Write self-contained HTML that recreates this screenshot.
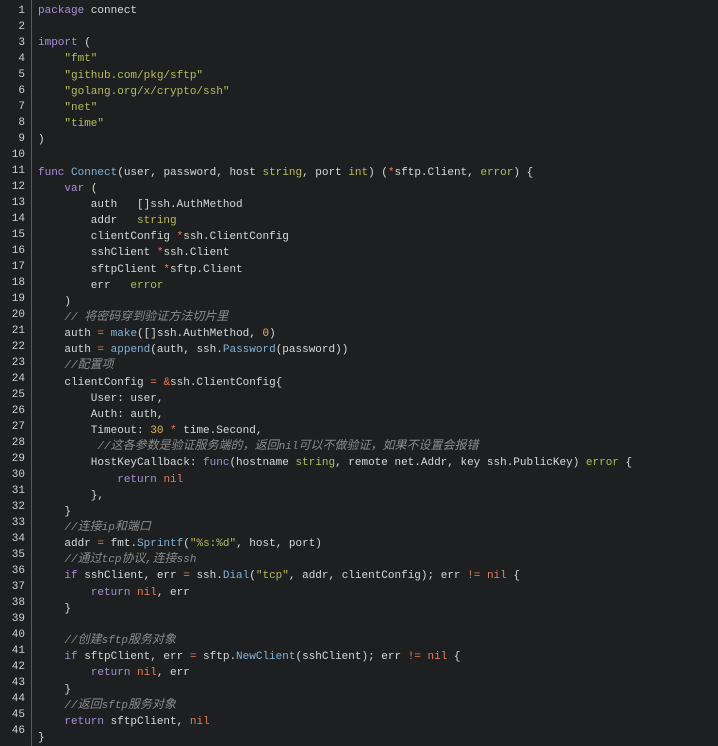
<!DOCTYPE html><html><head><meta charset="utf-8"><style>
body{margin:0;background:#1e1f20;width:718px;height:746px;overflow:hidden}
.w{position:relative;font-family:"Liberation Mono","Noto Sans CJK SC",monospace;font-size:11px;color:#d8d8d8}
.n{position:absolute;left:0;top:3px;width:25px;text-align:right;color:#d0d0d0;line-height:16px;white-space:pre}
.bar{position:absolute;left:31px;top:0;width:1px;height:746px;background:#5a5a5a}
.c{position:absolute;left:38px;top:3px;line-height:16.16px;white-space:pre}
.k{color:#a890d8}.s{color:#b5bd5c}.t{color:#b5bd5c}.f{color:#7fb4d9}.o{color:#e0805a}.m{color:#e8b85a}
.cm{color:#8c8c8c;font-style:italic}
.z{font-size:12px;line-height:10px}
</style></head><body><div class="w"><div class="bar"></div>
<div class="n">1
2
3
4
5
6
7
8
9
10
11
12
13
14
15
16
17
18
19
20
21
22
23
24
25
26
27
28
29
30
31
32
33
34
35
36
37
38
39
40
41
42
43
44
45
46</div>
<div class="c"><span class="k">package</span> connect

<span class="k">import</span> (
    <span class="s">"fmt"</span>
    <span class="s">"github.com/pkg/sftp"</span>
    <span class="s">"golang.org/x/crypto/ssh"</span>
    <span class="s">"net"</span>
    <span class="s">"time"</span>
)

<span class="k">func</span> <span class="f">Connect</span>(user, password, host <span class="t">string</span>, port <span class="t">int</span>) (<span class="o">*</span>sftp.Client, <span class="t">error</span>) {
    <span class="k">var</span> (
        auth   []ssh.AuthMethod
        addr   <span class="t">string</span>
        clientConfig <span class="o">*</span>ssh.ClientConfig
        sshClient <span class="o">*</span>ssh.Client
        sftpClient <span class="o">*</span>sftp.Client
        err   <span class="t">error</span>
    )
    <span class="cm">// <span class="z">将密码穿到验证方法切片里</span></span>
    auth <span class="o">=</span> <span class="f">make</span>([]ssh.AuthMethod, <span class="m">0</span>)
    auth <span class="o">=</span> <span class="f">append</span>(auth, ssh.<span class="f">Password</span>(password))
    <span class="cm">//<span class="z">配置项</span></span>
    clientConfig <span class="o">=</span> <span class="o">&amp;</span>ssh.ClientConfig{
        User: user,
        Auth: auth,
        Timeout: <span class="m">30</span> <span class="o">*</span> time.Second,
         <span class="cm">//<span class="z">这各参数是验证服务端的，返回</span>nil<span class="z">可以不做验证，如果不设置会报错</span></span>
        HostKeyCallback: <span class="k">func</span>(hostname <span class="t">string</span>, remote net.Addr, key ssh.PublicKey) <span class="t">error</span> {
            <span class="k">return</span> <span class="o">nil</span>
        },
    }
    <span class="cm">//<span class="z">连接</span>ip<span class="z">和端口</span></span>
    addr <span class="o">=</span> fmt.<span class="f">Sprintf</span>(<span class="s">"%s:%d"</span>, host, port)
    <span class="cm">//<span class="z">通过</span>tcp<span class="z">协议,连接</span>ssh</span>
    <span class="k">if</span> sshClient, err <span class="o">=</span> ssh.<span class="f">Dial</span>(<span class="s">"tcp"</span>, addr, clientConfig); err <span class="o">!=</span> <span class="o">nil</span> {
        <span class="k">return</span> <span class="o">nil</span>, err
    }

    <span class="cm">//<span class="z">创建</span>sftp<span class="z">服务对象</span></span>
    <span class="k">if</span> sftpClient, err <span class="o">=</span> sftp.<span class="f">NewClient</span>(sshClient); err <span class="o">!=</span> <span class="o">nil</span> {
        <span class="k">return</span> <span class="o">nil</span>, err
    }
    <span class="cm">//<span class="z">返回</span>sftp<span class="z">服务对象</span></span>
    <span class="k">return</span> sftpClient, <span class="o">nil</span>
}</div></div></body></html>
